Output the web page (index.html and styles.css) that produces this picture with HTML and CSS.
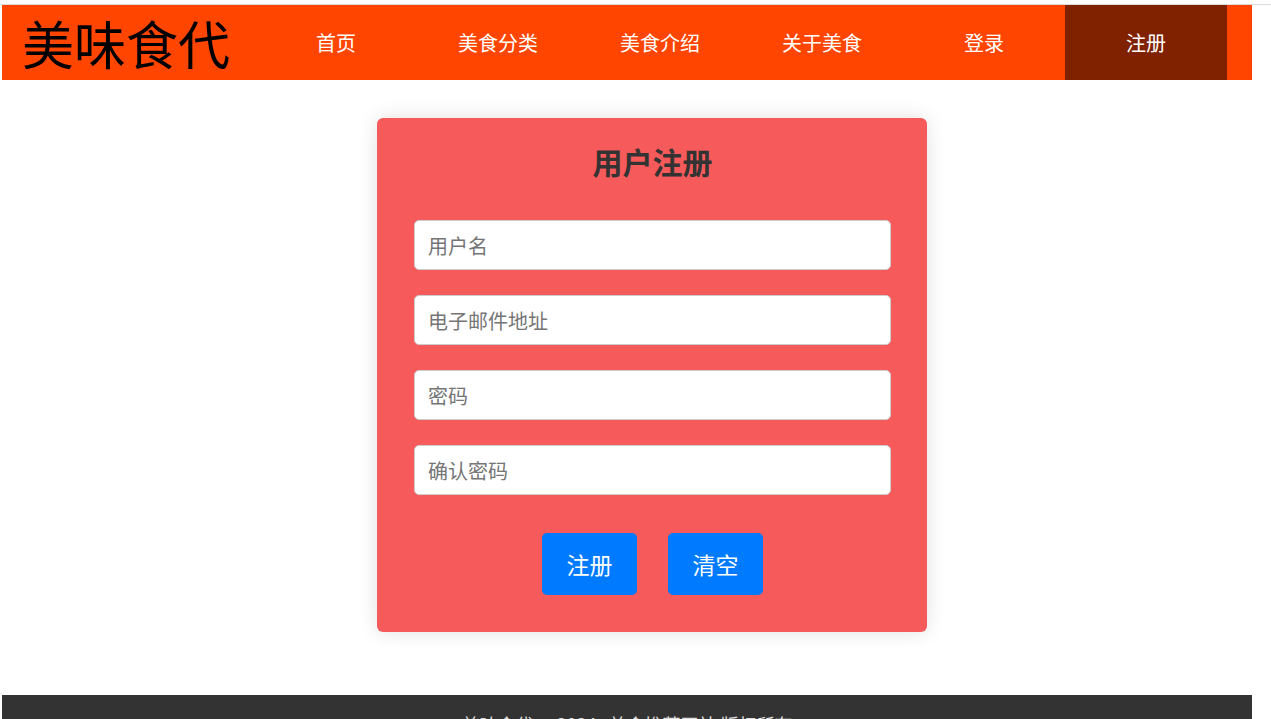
FILE: index.html
```html
<!DOCTYPE html>
<html lang="zh-CN">

<head>
    <meta charset="UTF-8">
    <meta name="viewport" content="width=device-width, initial-scale=1.0">
    <title>用户注册 - 美味食代</title>
    <link rel="stylesheet" href="styles.css">
</head>

<body>
    <div class="top-line"></div>
    <div class="page">
        <header class="header">
            <div class="logo">美味食代</div>
            <nav class="nav">
                <a href="#">首页</a>
                <a href="#">美食分类</a>
                <a href="#">美食介绍</a>
                <a href="#">关于美食</a>
                <a href="#">登录</a>
                <a href="#" class="active">注册</a>
            </nav>
        </header>

        <main class="main">
            <form class="register-box">
                <h2>用户注册</h2>
                <input type="text" placeholder="用户名">
                <input type="email" placeholder="电子邮件地址">
                <input type="password" placeholder="密码">
                <input type="password" placeholder="确认密码">
                <div class="btn-group">
                    <button type="submit" class="btn">注册</button>
                    <button type="reset" class="btn">清空</button>
                </div>
            </form>
        </main>

        <footer class="footer">
            <p>美味食代 &copy; 2024 &nbsp; 美食推荐网站 版权所有</p>
        </footer>
    </div>
</body>

</html>
```

FILE: styles.css
```css
body {
    margin: 0;
    font-family: "Noto Sans CJK SC", "Noto Sans", sans-serif;
    background-color: #fff;
    overflow: hidden;
}

.top-line {
    height: 4px;
    border-bottom: 1px solid #dcdcdc;
}

.page {
    width: 1250px;
    margin-left: 2px;
}

.header {
    display: flex;
    align-items: center;
    height: 75px;
    background-color: #ff4500;
}

.logo {
    width: 233px;
    padding-left: 20px;
    font-size: 52px;
    color: #000;
    line-height: 75px;
}

.nav {
    display: flex;
    height: 100%;
}

.nav a {
    width: 162px;
    display: flex;
    justify-content: center;
    align-items: center;
    color: #fff;
    text-decoration: none;
    font-size: 20px;
}

.nav a.active {
    background-color: #802200;
}

.main {
    padding: 38px 0 63px;
}

.register-box {
    width: 477px;
    margin-left: 375px;
    padding: 18px 36px 37px 37px;
    background-color: #f75a5a;
    border-radius: 6px;
    box-shadow: 0 0 20px rgba(0, 0, 0, 0.12);
    display: flex;
    flex-direction: column;
    gap: 25px;
}

.register-box h2 {
    margin: 0 0 9px;
    text-align: center;
    font-size: 30px;
    font-weight: bold;
    color: #333;
    line-height: 50px;
}

.register-box input {
    height: 50px;
    box-sizing: border-box;
    padding: 0 13px;
    border: 1px solid #ccc;
    border-radius: 5px;
    font-family: inherit;
    font-size: 20px;
    background-color: #fff;
}

.register-box input::placeholder {
    color: #757575;
}

.btn-group {
    display: flex;
    justify-content: center;
    gap: 31px;
    margin-top: 13px;
}

.btn {
    width: 95px;
    height: 62px;
    background-color: #007bff;
    color: #fff;
    border: none;
    border-radius: 5px;
    font-family: inherit;
    font-size: 23px;
    cursor: pointer;
}

.footer {
    background-color: #333;
    color: #ddd;
    text-align: center;
    padding: 16px 0;
}

.footer p {
    margin: 0;
    font-size: 18px;
}
```
